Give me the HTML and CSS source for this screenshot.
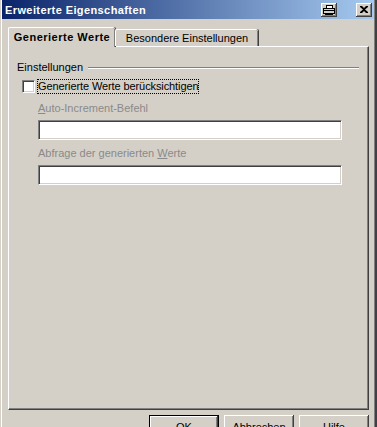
FILE: index.html
```html
<!DOCTYPE html>
<html lang="de">
<head>
    <meta charset="UTF-8">
    <title>Erweiterte Eigenschaften</title>
    <link rel="stylesheet" href="styles.css">
</head>
<body>
    <div class="window">
        <div class="titlebar">
            <span class="title">Erweiterte Eigenschaften</span>
            <div class="caption-buttons">
                <button class="cap-btn">
                    <svg width="12" height="10" viewBox="0 0 12 10">
                        <rect x="3.5" y="0.5" width="6" height="3" fill="#fff" stroke="#000"/>
                        <rect x="0.5" y="3.5" width="11" height="5" fill="#d4d0c8" stroke="#000"/>
                        <rect x="1" y="5" width="10" height="1" fill="#000"/>
                        <rect x="2" y="8" width="8" height="2" fill="#000"/>
                    </svg>
                </button>
                <button class="cap-btn close">
                    <svg width="8" height="7" viewBox="0 0 8 7">
                        <path d="M0 0h2l2 2 2-2h2v1L5 3.5 8 6v1H6L4 5 2 7H0V6l3-2.5L0 1z" fill="#000"/>
                    </svg>
                </button>
            </div>
        </div>

        <div class="dialog">
            <div class="tabs">
                <div class="tab active">Generierte Werte</div>
                <div class="tab">Besondere Einstellungen</div>
            </div>

            <div class="panel">
                <div class="group-head">
                    <span>Einstellungen</span>
                    <span class="groove"></span>
                </div>
                <div class="group-body">
                    <label class="check-row">
                        <span class="checkbox"></span>
                        <span class="focus">Generierte Werte berücksichtigen</span>
                    </label>
                    <div class="field-label"><u>A</u>uto-Increment-Befehl</div>
                    <div class="textbox"></div>
                    <div class="field-label">Abfrage der generierten <u>W</u>erte</div>
                    <div class="textbox"></div>
                </div>
            </div>

            <div class="buttons">
                <button class="btn default">OK</button>
                <button class="btn">Abbrechen</button>
                <button class="btn">Hilfe</button>
            </div>
        </div>
    </div>
</body>
</html>
```

FILE: styles.css
```css
body {
    margin: 0;
    background: #d4d0c8;
    font-family: 'Liberation Sans', Arial, sans-serif;
    font-size: 11px;
    color: #000;
}
.window {
    width: 377px;
    height: 427px;
    box-sizing: border-box;
    padding: 0 3px 0 2px;
    overflow: hidden;
    background: #d4d0c8;
    box-shadow: inset -2px 0 #404040, inset -3px 0 #808080, inset 1px 0 #d4d0c8, inset 2px 0 #fff;
}
.titlebar {
    height: 19px;
    display: flex;
    align-items: center;
    justify-content: space-between;
    background: linear-gradient(to right, #0a246a, #a6caf0);
}
.title {
    padding-left: 3px;
    color: #fff;
    font-weight: bold;
    font-size: 11px;
    letter-spacing: 0.4px;
}
.caption-buttons {
    display: flex;
    gap: 19px;
    margin-right: 2px;
}
.cap-btn {
    width: 16px;
    height: 14px;
    padding: 0;
    border: none;
    display: flex;
    align-items: center;
    justify-content: center;
    background: #d4d0c8;
    box-shadow: inset -1px -1px #404040, inset 1px 1px #fff, inset -2px -2px #808080;
}
.dialog {
    padding: 8px 5px 0 6px;
}
.tabs {
    display: flex;
    align-items: flex-end;
    position: relative;
    z-index: 1;
}
.tab {
    box-sizing: border-box;
    height: 17px;
    width: 143px;
    line-height: 16px;
    text-align: center;
    border-top: 1px solid #fff;
    border-left: 1px solid #fff;
    border-radius: 2px 2px 0 0;
    box-shadow: inset -1px 0 #808080, 1px 0 #404040;
    background: #d4d0c8;
}
.tab.active {
    width: 107px;
    height: 20px;
    margin-bottom: -1px;
    font-weight: bold;
    line-height: 18px;
    letter-spacing: 0.5px;
}
.panel {
    box-sizing: border-box;
    width: 361px;
    height: 364px;
    padding: 14px 9px 0 8px;
    border-top: 1px solid #fff;
    border-left: 1px solid #fff;
    border-right: 1px solid #404040;
    border-bottom: 1px solid #404040;
    box-shadow: inset -1px -1px #808080;
}
.group-head {
    display: flex;
    align-items: center;
    gap: 5px;
    line-height: 13px;
}
.groove {
    flex: 1;
    border-top: 1px solid #808080;
    border-bottom: 1px solid #fff;
    margin-top: 1px;
}
.group-body {
    padding-left: 5px;
}
.check-row {
    display: flex;
    align-items: center;
    margin-top: 5px;
    height: 15px;
}
.checkbox {
    box-sizing: border-box;
    width: 13px;
    height: 13px;
    background: #fff;
    border-top: 1px solid #808080;
    border-left: 1px solid #808080;
    border-right: 1px solid #fff;
    border-bottom: 1px solid #fff;
    box-shadow: inset 1px 1px #404040, inset -1px -1px #d4d0c8;
}
.focus {
    margin-left: 2px;
    padding: 0;
    line-height: 13px;
    border: 1px dotted #000;
    letter-spacing: -0.1px;
}
.field-label {
    margin: 7px 0 0 16px;
    line-height: 14px;
    color: #8a8a8a;
}
.field-label + .textbox {
    margin-top: 5px;
}
.textbox {
    box-sizing: border-box;
    margin-left: 16px;
    width: 304px;
    height: 20px;
    background: #fff;
    border-top: 1px solid #808080;
    border-left: 1px solid #808080;
    border-right: 1px solid #fff;
    border-bottom: 1px solid #fff;
    box-shadow: inset 1px 1px #404040, inset -1px -1px #d4d0c8;
}
.textbox + .field-label {
    margin-top: 6px;
}
.buttons {
    display: flex;
    justify-content: flex-end;
    gap: 5px;
    width: 361px;
    margin-top: 5px;
}
.btn {
    box-sizing: border-box;
    width: 70px;
    height: 23px;
    padding: 0;
    border: none;
    background: #d4d0c8;
    font-family: 'Liberation Sans', Arial, sans-serif;
    font-size: 11px;
    color: #000;
    box-shadow: inset -1px -1px #404040, inset 1px 1px #fff, inset -2px -2px #808080;
}
.btn.default {
    border: 1px solid #000;
}
```
